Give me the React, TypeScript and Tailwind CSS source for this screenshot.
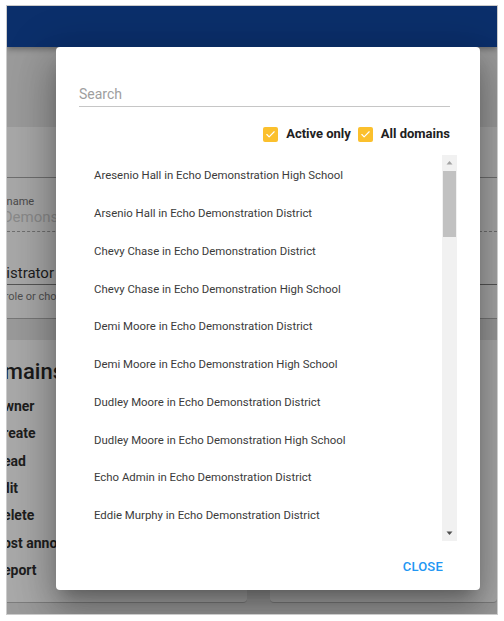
import { Check } from 'lucide-react';

const people = [
  'Aresenio Hall in Echo Demonstration High School',
  'Arsenio Hall in Echo Demonstration District',
  'Chevy Chase in Echo Demonstration District',
  'Chevy Chase in Echo Demonstration High School',
  'Demi Moore in Echo Demonstration District',
  'Demi Moore in Echo Demonstration High School',
  'Dudley Moore in Echo Demonstration District',
  'Dudley Moore in Echo Demonstration High School',
  'Echo Admin in Echo Demonstration District',
  'Eddie Murphy in Echo Demonstration District',
];

const permissions = ['Owner', 'Create', 'Read', 'Edit', 'Delete', 'Post announcement', 'Report'];

function Box({ label }: { label: string }) {
  return (
    <label className="flex items-center gap-[8px]">
      <span className="w-[15px] h-[15px] rounded-[2px] bg-[#fbc02d] flex items-center justify-center">
        <Check size={11} strokeWidth={2.5} className="text-white" />
      </span>
      <span className="text-[13px] font-bold text-[#212121]">{label}</span>
    </label>
  );
}

export default function App() {
  return (
    <div className="w-[504px] h-[621px] bg-white pl-[6px] pt-[5px] pr-[6px] pb-[6px] font-['Roboto',sans-serif]">
      <div className="relative w-[492px] h-[610px] border border-[#cbcbcb] overflow-hidden bg-[#9b9b9b] flex flex-col">
        <div className="h-[41px] shrink-0 bg-[#0b2f6b] shadow-[0_2px_6px_rgba(0,0,0,0.35)] z-10" />

        {/* page behind the dialog, already dimmed */}
        <div className="flex-1 flex flex-col">
          <div className="h-[80px] shrink-0" />
          <div className="h-[191px] shrink-0 bg-[#a8a8a8] flex flex-col">
            <div className="h-[51px] border-b border-[#6f6f6f]" />
            <div className="h-[54px] border-b border-dashed border-[#6f6f6f]">
              <div className="w-[49px] overflow-hidden whitespace-nowrap flex flex-col pt-[17px]">
                <span className="-ml-[41px] text-[11px] leading-[13px] text-[#4a4a4a]">Domain name</span>
                <span className="-ml-[41px] text-[15px] leading-[19px] text-[#8a8a8a]">Echo Demonstration District</span>
              </div>
            </div>
            <div className="h-[53px] border-b border-[#555] flex items-end pb-[1px]">
              <div className="w-[49px] overflow-hidden whitespace-nowrap">
                <span className="block -ml-[44px] text-[15px] leading-[19px] text-[#1d1d1d]">Administrator</span>
              </div>
            </div>
            <div className="flex-1 pt-[5px]">
              <div className="w-[49px] overflow-hidden whitespace-nowrap">
                <span className="block -ml-[44px] text-[11px] leading-[13px] text-[#4f4f4f]">Select a role or choose</span>
              </div>
            </div>
          </div>
          <div className="h-[22px] shrink-0 border-t border-[#777] bg-[#9a9a9a]" />
          <div className="flex-1 flex gap-[23px] pb-[11px]">
            <div className="w-[281px] bg-[#a9a9a9] rounded-b-[4px] border-b border-[#7d7d7d] -ml-[41px] flex">
              <div className="w-[90px] overflow-hidden whitespace-nowrap pl-[11px] flex flex-col">
                <span className="mt-[19px] text-[22px] leading-[26px] font-medium text-[#1a1a1a]">Domains</span>
                <div className="mt-[8px] pl-[17px] flex flex-col">
                  {permissions.map((p) => (
                    <span key={p} className="h-[27.3px] flex items-center text-[14px] font-bold text-[#1e1e1e]">
                      {p}
                    </span>
                  ))}
                </div>
              </div>
            </div>
            <div className="flex-1 bg-[#a9a9a9] rounded-b-[4px] border-b border-[#7d7d7d]" />
          </div>
        </div>

        {/* dialog */}
        <div className="absolute left-[49px] top-[41px] w-[424px] h-[543px] z-20 rounded-[4px] bg-white px-[23px] flex flex-col shadow-[0_11px_15px_-7px_rgba(0,0,0,0.25),0_24px_38px_3px_rgba(0,0,0,0.18),0_9px_46px_8px_rgba(0,0,0,0.18)]">
          <div className="pt-[34px] mr-[7px]">
            <input
              placeholder="Search"
              className="w-full h-[26px] border-b border-[#c6c6c6] outline-none text-[14px] text-[#333] placeholder:text-[#9e9e9e]"
            />
          </div>
          <div className="mt-[17px] h-[20px] mr-[7px] flex items-center justify-end gap-[7px]">
            <Box label="Active only" />
            <Box label="All domains" />
          </div>
          <div className="mt-[11px] h-[386px] flex">
            <ul className="flex-1 pt-[2px] pl-[15px]">
              {people.map((p) => (
                <li key={p} className="h-[37.75px] flex items-center text-[11.4px] text-[#3b3b3b]">
                  {p}
                </li>
              ))}
            </ul>
            <div className="w-[15px] bg-[#f1f1f1] flex flex-col items-center">
              <svg width="15" height="16" viewBox="0 0 15 16" className="shrink-0">
                <path d="M4.5 9.5 L7.5 6 L10.5 9.5 Z" fill="#a3a3a3" />
              </svg>
              <div className="w-[13px] h-[66px] bg-[#c1c1c1]" />
              <div className="flex-1" />
              <svg width="15" height="16" viewBox="0 0 15 16" className="shrink-0">
                <path d="M4.5 6.5 L7.5 10 L10.5 6.5 Z" fill="#505050" />
              </svg>
            </div>
          </div>
          <div className="flex-1 flex items-center justify-end pt-[3px] pr-[14px]">
            <button className="text-[13px] font-medium tracking-[0.2px] text-[#2196f3]">CLOSE</button>
          </div>
        </div>
      </div>
    </div>
  );
}
